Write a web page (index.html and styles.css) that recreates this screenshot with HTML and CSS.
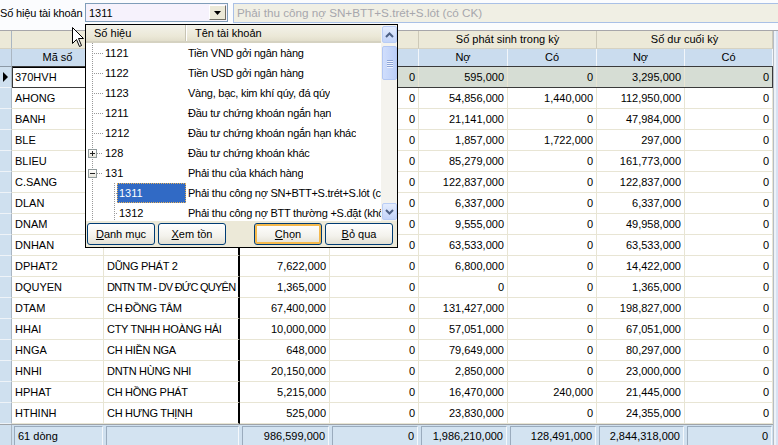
FILE: index.html
```html
<!DOCTYPE html>
<html lang="vi">
<head>
<meta charset="utf-8">
<title>Số hiệu tài khoản</title>
<link rel="stylesheet" href="styles.css">
</head>
<body>
<div class="app">
  <div class="topbar">
    <span class="lbl">Số hiệu tài khoản</span>
    <div class="combo">
      <span class="combo-val">1311</span>
      <span class="combo-btn"><svg width="7" height="4" viewBox="0 0 7 4"><path d="M0 0H7L3.5 4Z" fill="#000"/></svg></span>
    </div>
    <div class="desc">Phải thu công nợ SN+BTT+S.trét+S.lót (có CK)</div>
  </div>

  <div class="gridwrap">
    <div class="grid">
      <div class="r h1">
        <div class="i"></div>
        <div class="s2"></div>
        <div class="s2"></div>
        <div class="s2">Số phát sinh trong kỳ</div>
        <div class="s2">Số dư cuối kỳ</div>
      </div>
      <div class="r h2">
        <div class="i"></div>
        <div>Mã số</div>
        <div></div>
        <div></div>
        <div></div>
        <div>Nợ</div>
        <div>Có</div>
        <div>Nợ</div>
        <div>Có</div>
      </div>

      <div class="r sel">
        <div class="i"><span class="tri"></span></div>
        <div class="cur">370HVH</div>
        <div class="nm"></div>
        <div class="n"></div><div class="n">0</div><div class="n">595,000</div><div class="n">0</div><div class="n">3,295,000</div><div class="n">0</div>
      </div>
      <div class="r">
        <div class="i"></div><div>AHONG</div><div class="nm"></div>
        <div class="n"></div><div class="n">0</div><div class="n">54,856,000</div><div class="n">1,440,000</div><div class="n">112,950,000</div><div class="n">0</div>
      </div>
      <div class="r">
        <div class="i"></div><div>BANH</div><div class="nm"></div>
        <div class="n"></div><div class="n">0</div><div class="n">21,141,000</div><div class="n">0</div><div class="n">47,984,000</div><div class="n">0</div>
      </div>
      <div class="r">
        <div class="i"></div><div>BLE</div><div class="nm"></div>
        <div class="n"></div><div class="n">0</div><div class="n">1,857,000</div><div class="n">1,722,000</div><div class="n">297,000</div><div class="n">0</div>
      </div>
      <div class="r">
        <div class="i"></div><div>BLIEU</div><div class="nm"></div>
        <div class="n"></div><div class="n">0</div><div class="n">85,279,000</div><div class="n">0</div><div class="n">161,773,000</div><div class="n">0</div>
      </div>
      <div class="r">
        <div class="i"></div><div>C.SANG</div><div class="nm"></div>
        <div class="n"></div><div class="n">0</div><div class="n">122,837,000</div><div class="n">0</div><div class="n">122,837,000</div><div class="n">0</div>
      </div>
      <div class="r">
        <div class="i"></div><div>DLAN</div><div class="nm"></div>
        <div class="n"></div><div class="n">0</div><div class="n">6,337,000</div><div class="n">0</div><div class="n">6,337,000</div><div class="n">0</div>
      </div>
      <div class="r">
        <div class="i"></div><div>DNAM</div><div class="nm"></div>
        <div class="n"></div><div class="n">0</div><div class="n">9,555,000</div><div class="n">0</div><div class="n">49,958,000</div><div class="n">0</div>
      </div>
      <div class="r">
        <div class="i"></div><div>DNHAN</div><div class="nm"></div>
        <div class="n"></div><div class="n">0</div><div class="n">63,533,000</div><div class="n">0</div><div class="n">63,533,000</div><div class="n">0</div>
      </div>
      <div class="r">
        <div class="i"></div><div>DPHAT2</div><div class="nm">DŨNG PHÁT 2</div>
        <div class="n">7,622,000</div><div class="n">0</div><div class="n">6,800,000</div><div class="n">0</div><div class="n">14,422,000</div><div class="n">0</div>
      </div>
      <div class="r">
        <div class="i"></div><div>DQUYEN</div><div class="nm tight">DNTN TM - DV ĐỨC QUYÊN</div>
        <div class="n">1,365,000</div><div class="n">0</div><div class="n">0</div><div class="n">0</div><div class="n">1,365,000</div><div class="n">0</div>
      </div>
      <div class="r">
        <div class="i"></div><div>DTAM</div><div class="nm">CH ĐỒNG TÂM</div>
        <div class="n">67,400,000</div><div class="n">0</div><div class="n">131,427,000</div><div class="n">0</div><div class="n">198,827,000</div><div class="n">0</div>
      </div>
      <div class="r">
        <div class="i"></div><div>HHAI</div><div class="nm">CTY TNHH HOÀNG HẢI</div>
        <div class="n">10,000,000</div><div class="n">0</div><div class="n">57,051,000</div><div class="n">0</div><div class="n">67,051,000</div><div class="n">0</div>
      </div>
      <div class="r">
        <div class="i"></div><div>HNGA</div><div class="nm">CH HIỀN NGA</div>
        <div class="n">648,000</div><div class="n">0</div><div class="n">79,649,000</div><div class="n">0</div><div class="n">80,297,000</div><div class="n">0</div>
      </div>
      <div class="r">
        <div class="i"></div><div>HNHI</div><div class="nm">DNTN HÙNG NHI</div>
        <div class="n">20,150,000</div><div class="n">0</div><div class="n">2,850,000</div><div class="n">0</div><div class="n">23,000,000</div><div class="n">0</div>
      </div>
      <div class="r">
        <div class="i"></div><div>HPHAT</div><div class="nm">CH HỒNG PHÁT</div>
        <div class="n">5,215,000</div><div class="n">0</div><div class="n">16,470,000</div><div class="n">240,000</div><div class="n">21,445,000</div><div class="n">0</div>
      </div>
      <div class="r">
        <div class="i"></div><div>HTHINH</div><div class="nm">CH HƯNG THỊNH</div>
        <div class="n">525,000</div><div class="n">0</div><div class="n">23,830,000</div><div class="n">0</div><div class="n">24,355,000</div><div class="n">0</div>
      </div>

      <div class="r foot">
        <div class="i"></div>
        <div><span class="fc">61 dòng</span></div>
        <div><span class="fc"></span></div>
        <div><span class="fc n">986,599,000</span></div>
        <div><span class="fc n">0</span></div>
        <div><span class="fc n">1,986,210,000</span></div>
        <div><span class="fc n">128,491,000</span></div>
        <div><span class="fc n">2,844,318,000</span></div>
        <div><span class="fc n">0</span></div>
      </div>
    </div>
    <div class="gscroll"></div>
  </div>

  <div class="popup">
    <div class="plist">
      <div class="tree">
        <div class="thead">
          <div class="tc1">Số hiệu</div>
          <div class="tc2">Tên tài khoản</div>
        </div>
        <div class="trow"><div class="tcode"><span class="ln tee"></span><span class="tx">1121</span></div><div class="tname">Tiền VND gởi ngân hàng</div></div>
        <div class="trow"><div class="tcode"><span class="ln tee"></span><span class="tx">1122</span></div><div class="tname">Tiền USD gởi ngân hàng</div></div>
        <div class="trow"><div class="tcode"><span class="ln tee"></span><span class="tx">1123</span></div><div class="tname">Vàng, bạc, kim khí qúy, đá qúy</div></div>
        <div class="trow"><div class="tcode"><span class="ln tee"></span><span class="tx">1211</span></div><div class="tname">Đầu tư chứng khoán ngắn hạn</div></div>
        <div class="trow"><div class="tcode"><span class="ln tee"></span><span class="tx">1212</span></div><div class="tname">Đầu tư chứng khoán ngắn hạn khác</div></div>
        <div class="trow"><div class="tcode"><span class="ln exp"><span class="box plus"></span></span><span class="tx">128</span></div><div class="tname">Đầu tư chứng khoán khác</div></div>
        <div class="trow"><div class="tcode"><span class="ln exp"><span class="box"></span></span><span class="tx">131</span></div><div class="tname">Phải thu của khách hàng</div></div>
        <div class="trow"><div class="tcode"><span class="ln pipe"></span><span class="ln2 tee"></span><span class="tx hl">1311</span></div><div class="tname">Phải thu công nợ SN+BTT+S.trét+S.lót (có CK)</div></div>
        <div class="trow"><div class="tcode"><span class="ln pipe"></span><span class="ln2 tee"></span><span class="tx">1312</span></div><div class="tname">Phải thu công nợ BTT thường +S.đặt (không CK)</div></div>
      </div>
      <div class="vs">
        <div class="sbtn"><svg width="9" height="6" viewBox="0 0 9 6"><path d="M1 5L4.5 1.5L8 5" fill="none" stroke="#4d6185" stroke-width="2"/></svg></div>
        <div class="track"><div class="thumb"><span></span><span></span><span></span><span></span></div></div>
        <div class="sbtn"><svg width="9" height="6" viewBox="0 0 9 6"><path d="M1 1L4.5 4.5L8 1" fill="none" stroke="#4d6185" stroke-width="2"/></svg></div>
      </div>
    </div>
    <div class="pbtns">
      <button class="btn"><u>D</u>anh mục</button>
      <button class="btn"><u>X</u>em tồn</button>
      <button class="btn def push"><u>C</u>họn</button>
      <button class="btn"><u>B</u>ỏ qua</button>
    </div>
  </div>

  <svg class="cursor" width="13" height="21" viewBox="0 0 13 21"><path d="M0.5 0.5V16.5L4.5 12.5L7.5 19.5L9.5 18.5L6.5 11.5H11.5Z" fill="#fff" stroke="#000" stroke-width="1" stroke-linejoin="miter"/></svg>
</div>
</body>
</html>
```

FILE: styles.css
```css
html, body {
  margin: 0;
  padding: 0;
  background: #fbfcfe;
  overflow: hidden;
}
body {
  font-family: "Liberation Sans", Arial, sans-serif;
  font-size: 11px;
  color: #000;
}
.app {
  position: relative;
  width: 778px;
  height: 445px;
  overflow: hidden;
}

/* top bar */
.topbar {
  display: flex;
  align-items: flex-start;
  height: 30px;
  box-sizing: border-box;
}
.lbl {
  width: 85px;
  flex: none;
  padding-top: 7px;
  white-space: nowrap;
  letter-spacing: -0.15px;
}
.combo {
  margin-top: 3px;
  width: 143px;
  height: 19px;
  box-sizing: border-box;
  border: 1px solid #7f9db9;
  background: #f6f2fc;
  display: flex;
  align-items: center;
  justify-content: space-between;
}
.combo-val {
  padding-left: 3px;
}
.combo-btn {
  width: 17px;
  height: 15px;
  margin-right: 1px;
  box-sizing: border-box;
  background: #ece9d8;
  border: 1px solid;
  border-color: #fff #716f64 #716f64 #fff;
  display: flex;
  align-items: center;
  justify-content: center;
}
.desc {
  margin-top: 3px;
  margin-left: 5px;
  flex: 1;
  height: 20px;
  box-sizing: border-box;
  border: 1px solid #a9c0e6;
  border-right: none;
  background: #f0efe4;
  color: #a7a7ad;
  padding-left: 3px;
  font-size: 11.7px;
  line-height: 18px;
  white-space: nowrap;
}

/* grid */
.gridwrap {
  display: flex;
  border-top: 1px solid #a7a6aa;
}
.grid {
  width: 773px;
  display: flex;
  flex-direction: column;
}
.r {
  display: grid;
  grid-template-columns: 12px 92px 136px 90px 89px 89px 89px 88px 88px;
  height: 21px;
}
.r > div {
  box-sizing: border-box;
  border-right: 1px solid #e8e5d4;
  border-bottom: 1px solid #e8e5d4;
  padding: 0 3px;
  line-height: 20px;
  white-space: nowrap;
  overflow: hidden;
  background: #fff;
}
.r > .n {
  text-align: right;
  padding-right: 3px;
}
.r > .i {
  padding: 0;
  background: #cfe0ef;
  border-right: 1px solid #aab6c2;
  border-bottom: 1px solid #eef3f8;
  display: flex;
  align-items: center;
}
.r > .nm {
  border-right: 2px solid #000;
  letter-spacing: -0.3px;
}
.r > .nm.tight {
  letter-spacing: -0.75px;
}
.tri {
  width: 0;
  height: 0;
  margin-left: 3px;
  border-top: 5px solid transparent;
  border-bottom: 5px solid transparent;
  border-left: 5px solid #000;
}

.h1, .h2 {
  height: 18px;
}
.h1 > div {
  background: #ece9d8;
  border-right: 1px solid #cdc9b8;
  border-bottom: 1px solid #d6d2c2;
  line-height: 17px;
  text-align: center;
}
.h1 > .i {
  background: #ece9d8;
  border-bottom: 1px solid #d6d2c2;
}
.h1 > .s2 {
  grid-column: span 2;
}
.h2 > div {
  background: #cadcee;
  border-right: 1px solid #f2f6fa;
  border-bottom: 1px solid #8c99a6;
  line-height: 17px;
  text-align: center;
}
.h2 > .i {
  background: #cadcee;
  border-bottom: 1px solid #8c99a6;
}

.sel {
  position: relative;
}
.sel > div {
  background: #d6ddd4;
}
.sel > .cur {
  background: #fff;
  border: 1px solid #000;
  line-height: 18px;
  padding-left: 2px;
}
.sel::after {
  content: "";
  position: absolute;
  left: 12px;
  right: 0;
  top: -1px;
  bottom: 0;
  border: 1px solid #3a3a3a;
  pointer-events: none;
}

.foot {
  height: 22px;
  border-top: 1px solid #a0a4a8;
}
.foot > div {
  background: #cfe0ef;
  border: none;
  padding: 1px 1px 0 2px;
  line-height: normal;
}
.foot > .i {
  border-right: 1px solid #aab6c2;
}
.fc {
  display: block;
  box-sizing: border-box;
  height: 20px;
  line-height: 18px;
  padding: 0 3px;
  border: 1px solid;
  border-color: #9aabbd #f4f8fc #f4f8fc #9aabbd;
  background: #d3e3f1;
}
.fc.n {
  text-align: right;
}
.gscroll {
  flex: 1;
  background: #eef2f8;
  border-left: 1px solid #b5bcc5;
  box-shadow: inset -2px 0 0 #d7e2f3;
}

/* popup */
.popup {
  position: absolute;
  left: 85px;
  top: 24px;
  width: 313px;
  height: 224px;
  box-sizing: border-box;
  border: 1px solid #000;
  background: #ece9d8;
  display: flex;
  flex-direction: column;
}
.plist {
  height: 196px;
  display: flex;
  overflow: hidden;
  background: #fff;
}
.tree {
  width: 295px;
  overflow: hidden;
}
.thead {
  display: flex;
  height: 18px;
  box-sizing: border-box;
  background: linear-gradient(#f3f2ea, #ebe8d7 70%, #e2decb);
  border-bottom: 2px solid #d5d2c1;
  line-height: 16px;
}
.tc1 {
  width: 100px;
  box-sizing: border-box;
  padding-left: 8px;
  border-right: 1px solid #c7c4b4;
  box-shadow: 1px 0 0 #fff;
}
.tc2 {
  padding-left: 9px;
}
.trow {
  display: flex;
  height: 20px;
  line-height: 20px;
  white-space: nowrap;
}
.tcode {
  width: 100px;
  flex: none;
  display: flex;
  padding-left: 2px;
  box-sizing: border-box;
}
.tname {
  padding-left: 2px;
  overflow: hidden;
  letter-spacing: -0.25px;
}
.ln, .ln2 {
  flex: none;
  height: 20px;
  display: flex;
  align-items: center;
}
.ln {
  width: 16px;
}
.ln2 {
  width: 14px;
}
.tee {
  background:
    repeating-linear-gradient(to bottom, #999 0 1px, transparent 1px 2px) 4px 0 / 1px 100% no-repeat,
    repeating-linear-gradient(to right, #999 0 1px, transparent 1px 2px) 4px 10px / 11px 1px no-repeat;
}
.ln2.tee {
  background:
    repeating-linear-gradient(to bottom, #999 0 1px, transparent 1px 2px) 10px 0 / 1px 100% no-repeat,
    repeating-linear-gradient(to right, #999 0 1px, transparent 1px 2px) 10px 10px / 5px 1px no-repeat;
}
.pipe {
  width: 16px;
  background: repeating-linear-gradient(to bottom, #999 0 1px, transparent 1px 2px) 4px 0 / 1px 100% no-repeat;
}
.exp {
  background:
    repeating-linear-gradient(to bottom, #999 0 1px, transparent 1px 2px) 4px 0 / 1px 100% no-repeat,
    repeating-linear-gradient(to right, #999 0 1px, transparent 1px 2px) 9px 10px / 6px 1px no-repeat;
}
.box {
  width: 9px;
  height: 9px;
  box-sizing: border-box;
  margin-top: 1px;
  border: 1px solid #919b9c;
  background:
    linear-gradient(#222, #222) 1px 3px / 5px 1px no-repeat,
    linear-gradient(#fff, #e6e4da);
}
.box.plus {
  background:
    linear-gradient(#222, #222) 1px 3px / 5px 1px no-repeat,
    linear-gradient(#222, #222) 3px 1px / 1px 5px no-repeat,
    linear-gradient(#fff, #e6e4da);
}
.tx {
  padding-left: 1px;
}
.tx.hl {
  flex: 1;
  margin-left: -1px;
  padding-left: 2px;
  background: #316ac5;
  color: #fff;
  outline: 1px dotted #e6b25a;
  outline-offset: -1px;
}

/* popup scrollbar */
.vs {
  width: 16px;
  display: flex;
  flex-direction: column;
  background: #f4f3ee;
}
.sbtn {
  height: 17px;
  box-sizing: border-box;
  margin: 1px 0 0 1px;
  border: 1px solid #b9cdf5;
  border-radius: 2px;
  background: linear-gradient(#e4ecfd, #c3d4f9);
  display: flex;
  align-items: center;
  justify-content: center;
}
.sbtn:last-child {
  margin: 0 0 1px 1px;
}
.track {
  flex: 1;
  padding-top: 3px;
}
.thumb {
  height: 34px;
  margin-left: 1px;
  box-sizing: border-box;
  border: 1px solid #b3c7f3;
  border-radius: 2px;
  background: linear-gradient(to right, #d0defc, #bccff8);
  display: flex;
  flex-direction: column;
  justify-content: center;
  align-items: center;
  gap: 1px;
}
.thumb span {
  width: 6px;
  height: 1px;
  background: #8ea5d7;
  box-shadow: 0 1px 0 #eef3ff;
}

/* popup buttons */
.pbtns {
  flex: 1;
  display: flex;
  gap: 3px;
  padding: 2px 4px 0 1px;
}
.btn {
  width: 68px;
  height: 22px;
  box-sizing: border-box;
  border: 1px solid #003c74;
  border-radius: 3px;
  background: linear-gradient(#ffffff, #f3f2ec 60%, #e3e0d4);
  font-family: "Liberation Sans", Arial, sans-serif;
  font-size: 11px;
  color: #000;
  padding: 0;
}
.btn.def {
  box-shadow: inset 0 0 0 2px #f5b94c;
}
.btn.push {
  margin-left: auto;
}

/* cursor overlay */
.cursor {
  position: absolute;
  left: 72px;
  top: 27px;
}
```
